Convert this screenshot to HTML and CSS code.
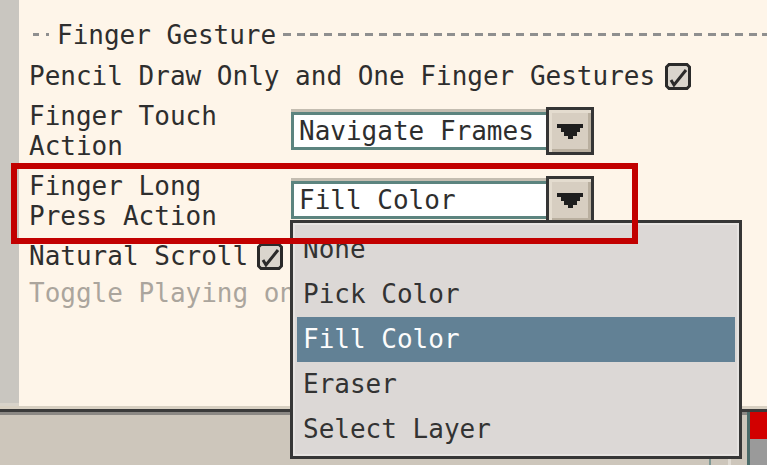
FILE: index.html
```html
<!DOCTYPE html>
<html>
<head>
<meta charset="utf-8">
<link rel="stylesheet" href="styles.css">
</head>
<body>
<div class="screen">
  <div class="main">
    <div class="strip"></div>
    <div class="panel">
      <div class="heading">
        <span class="hdash"></span><span class="hdot"></span>
        <span class="htext">Finger Gesture</span>
        <span class="rule"></span>
      </div>
      <div class="row">
        <span>Pencil Draw Only and One Finger Gestures</span>
        <svg class="cb" viewBox="0 0 26 27" width="26" height="27"><path d="M4 1.5h18l2.5 2.5v19l-2.5 2.5h-18l-2.5-2.5v-19z" fill="#dad5cd" stroke="#2a2a2a" stroke-width="3"/><path d="M6 17l3 5L21 7" fill="none" stroke="#2a2a2a" stroke-width="3"/></svg>
      </div>
      <div class="row">
        <div class="label">Finger Touch<br>Action</div>
        <div class="combo">
          <div class="field">Navigate Frames</div>
          <div class="btn"><svg width="26" height="15" viewBox="0 0 26 15"><path d="M0 0H26V4H23V8H20V12H16V15H11V12H7V8H4V4H0Z" fill="#1e1e1e"/></svg></div>
        </div>
      </div>
      <div class="row">
        <div class="label">Finger Long<br>Press Action</div>
        <div class="combo combo2">
          <div class="field">Fill Color</div>
          <div class="btn"><svg width="26" height="15" viewBox="0 0 26 15"><path d="M0 0H26V4H23V8H20V12H16V15H11V12H7V8H4V4H0Z" fill="#1e1e1e"/></svg></div>
        </div>
      </div>
      <div class="row">
        <span>Natural Scroll</span>
        <svg class="cb cb2" viewBox="0 0 26 27" width="26" height="27"><path d="M4 1.5h18l2.5 2.5v19l-2.5 2.5h-18l-2.5-2.5v-19z" fill="#dad5cd" stroke="#2a2a2a" stroke-width="3"/><path d="M6 17l3 5L21 7" fill="none" stroke="#2a2a2a" stroke-width="3"/></svg>
      </div>
      <div class="row muted"><span class="clip">Toggle Playing on</span></div>
    </div>
  </div>
  <div class="sep-light"></div>
  <div class="sep-dark"></div>
  <div class="bottom">
    <div class="bottom-fill"></div>
    <div class="vline thin"></div>
    <div class="gap1"></div>
    <div class="vline light"></div>
    <div class="gap2"></div>
    <div class="vline teal"></div>
    <div class="tabcol"><div class="red"></div><div class="grey"></div></div>
  </div>

  <div class="popup">
    <div class="item">None</div>
    <div class="item">Pick Color</div>
    <div class="item selected">Fill Color</div>
    <div class="item">Eraser</div>
    <div class="item">Select Layer</div>
  </div>
  <div class="highlight"></div>
</div>
</body>
</html>
```

FILE: styles.css
```css
html, body {
  margin: 0;
  padding: 0;
}
body {
  width: 767px;
  height: 465px;
  overflow: hidden;
  background: #cdc6bb;
  font-family: "DejaVu Sans Mono", "Liberation Mono", monospace;
  font-size: 26px;
  color: #2e2e2e;
}
.screen {
  position: relative;
  width: 767px;
  height: 465px;
}
.main {
  display: flex;
  height: 406px;
}
.strip {
  width: 19px;
  background: #c9c6c0;
  border-bottom: 3px solid #d8d3ca;
  box-sizing: border-box;
}
.panel {
  flex: 1;
  background: #fef5e9;
  padding: 20px 0 0 10px;
  box-sizing: border-box;
  display: flex;
  flex-direction: column;
  gap: 10px;
}
.heading {
  display: flex;
  align-items: center;
  height: 30px;
  line-height: 30px;
  margin-bottom: 1px;
}
.hdash {
  width: 6px;
  height: 3px;
  margin-left: 4px;
  background: #8f8f8f;
  margin-top: -1px;
}
.hdot {
  width: 3px;
  height: 3px;
  margin-left: 7px;
  background: #8f8f8f;
  margin-top: -1px;
}
.htext {
  margin-left: 8px;
  white-space: nowrap;
}
.rule {
  flex: 1;
  height: 3px;
  margin-left: 7px;
  margin-top: -1px;
  background: repeating-linear-gradient(to right, #8f8f8f 0 8px, transparent 8px 13.7px);
}
.row {
  display: flex;
  align-items: center;
  line-height: 30px;
  white-space: nowrap;
}
.label {
  width: 262px;
}
.cb {
  display: block;
  margin-left: 10px;
  flex: none;
}
.cb2 {
  margin-left: 9px;
}
.combo {
  display: flex;
  align-items: center;
}
.combo2 {
  margin-top: -3px;
}
.field {
  width: 257px;
  height: 38px;
  box-sizing: border-box;
  background: #ffffff;
  border-top: 3px solid #5c847f;
  border-left: 3px solid #5c847f;
  border-bottom: 3px solid #5c847f;
  box-shadow: 0 -3px 0 #c4bdb1;
  padding-left: 5px;
  line-height: 32px;
}
.btn {
  width: 48px;
  height: 48px;
  box-sizing: border-box;
  margin-left: -2px;
  border: 3px solid #353535;
  background: #d7cec1;
  box-shadow: inset 3px 3px 0 #e4dccf, inset -3px -3px 0 #b9af9f;
  display: flex;
  align-items: center;
  justify-content: center;
}
.btn svg {
  display: block;
  margin-top: 1px;
}
.muted {
  color: #aba59d;
  margin-top: -3px;
}
.clip {
  display: block;
  width: 261px;
  overflow: hidden;
}
.sep-light {
  height: 3px;
  background: #d8d0c2;
}
.sep-dark {
  height: 3px;
  background: #3a3a3a;
  box-shadow: 0 3px 0 #8b8884;
}
.bottom {
  display: flex;
  height: 53px;
}
.bottom-fill {
  width: 709px;
}
.vline {
  width: 2px;
}
.vline.thin {
  background: #7f9895;
}
.gap1 {
  width: 17px;
}
.vline.light {
  background: #e0dbd3;
  width: 3px;
}
.gap2 {
  width: 16px;
}
.vline.teal {
  width: 3px;
  background: #4b6b69;
}
.tabcol {
  width: 17px;
  display: flex;
  flex-direction: column;
}
.red {
  height: 27px;
  background: #d20000;
}
.grey {
  flex: 1;
  background: #9a9a9a;
}
.popup {
  position: absolute;
  left: 290px;
  top: 220px;
  width: 452px;
  height: 239px;
  box-sizing: border-box;
  border: 3px solid #363636;
  background: #dcd8d6;
  box-shadow: inset 0 0 0 2px #e6e3e1;
  padding: 4px;
  z-index: 5;
}
.item {
  height: 45px;
  line-height: 45px;
  padding-left: 6px;
  white-space: nowrap;
  color: #333333;
}
.item.selected {
  background: #628195;
  color: #fcfcfc;
}
.highlight {
  position: absolute;
  left: 11px;
  top: 163px;
  width: 627px;
  height: 81px;
  box-sizing: border-box;
  border: 6px solid #c20000;
  z-index: 10;
}
```
